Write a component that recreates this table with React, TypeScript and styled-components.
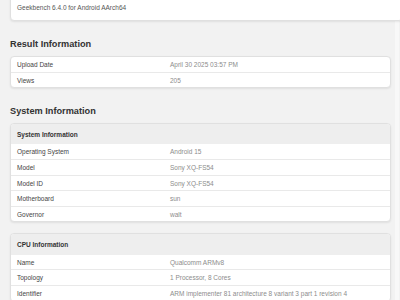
import React from "react";
import styled, { createGlobalStyle } from "styled-components";

const Global = createGlobalStyle`
  html, body { margin: 0; padding: 0; background: #f2f2f2; overflow: hidden; }
  body { font-family: "Liberation Sans", Arial, sans-serif; }
`;

const Page = styled.div`
  width: 383px;
  padding: 0 2px 0 10px;
  border-right: 4px solid #f8f8f8;
  min-height: 300px;
  box-sizing: content-box;
`;

const Card = styled.div<{ $gap?: number }>`
  background: #fff;
  border: 1px solid #e0e0e0;
  border-radius: 4px;
  box-shadow: 0 1px 2px rgba(0, 0, 0, 0.08);
  width: 379px;
  overflow: hidden;
  margin-top: ${(p) => (p.$gap ? `${p.$gap}px` : "0")};
`;

const TopCard = styled(Card)`
  margin-top: -10px;
  padding: 10px 6px 5px;
  font-size: 6.5px;
  line-height: 14px;
  color: #555;
`;

const Heading = styled.h2`
  margin: 16.5px 0 6.5px;
  font-size: 9.2px;
  line-height: 12px;
  font-weight: 700;
  color: #333;
`;

const CardHeader = styled.div`
  background: #eeeeee;
  padding: 0 6px;
  height: 20.3px;
  line-height: 21px;
  font-size: 6.5px;
  font-weight: 700;
  color: #333;
`;

const Row = styled.div`
  display: grid;
  grid-template-columns: 153px 1fr;
  padding: 0 6px;
  height: 14.6px;
  line-height: 15px;
  font-size: 6.5px;
  & + & { border-top: 1px solid #e9e9e9; }
`;

const Label = styled.span`
  color: #444;
`;

const Value = styled.span`
  color: #8c8c8c;
  white-space: nowrap;
`;

type Item = [string, string];

const InfoTable = ({ title, items, gap }: { title?: string; items: Item[]; gap?: number }) => (
  <Card $gap={gap}>
    {title && <CardHeader>{title}</CardHeader>}
    {items.map(([k, v]) => (
      <Row key={k}>
        <Label>{k}</Label>
        <Value>{v}</Value>
      </Row>
    ))}
  </Card>
);

export default function App() {
  return (
    <>
      <Global />
      <Page>
        <TopCard>Geekbench 6.4.0 for Android AArch64</TopCard>
        <Heading>Result Information</Heading>
        <InfoTable
          items={[
            ["Upload Date", "April 30 2025 03:57 PM"],
            ["Views", "205"],
          ]}
        />
        <Heading>System Information</Heading>
        <InfoTable
          title="System Information"
          items={[
            ["Operating System", "Android 15"],
            ["Model", "Sony XQ-FS54"],
            ["Model ID", "Sony XQ-FS54"],
            ["Motherboard", "sun"],
            ["Governor", "walt"],
          ]}
        />
        <InfoTable
          gap={11}
          title="CPU Information"
          items={[
            ["Name", "Qualcomm ARMv8"],
            ["Topology", "1 Processor, 8 Cores"],
            ["Identifier", "ARM implementer 81 architecture 8 variant 3 part 1 revision 4"],
          ]}
        />
      </Page>
    </>
  );
}
